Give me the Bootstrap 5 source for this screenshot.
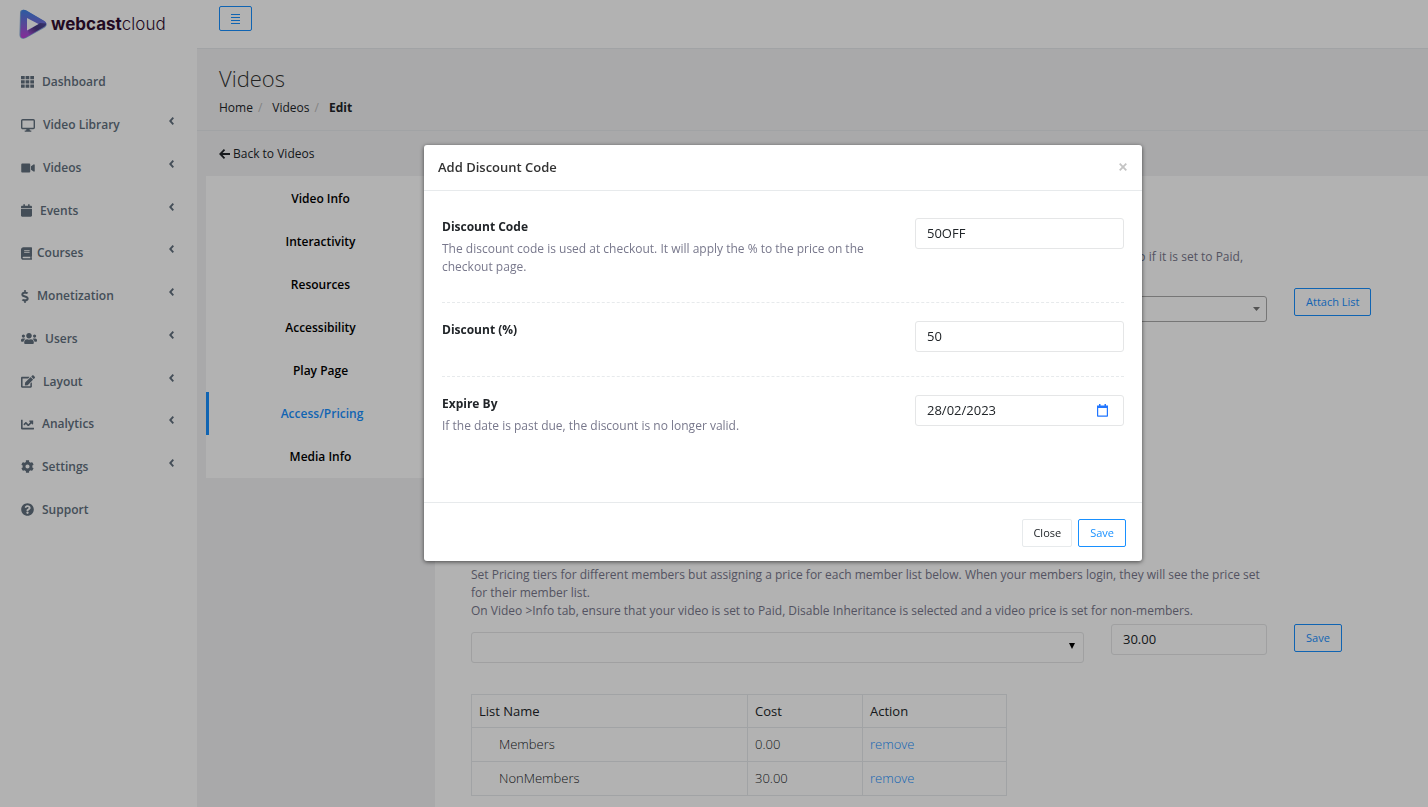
<!DOCTYPE html>
<html lang="en">
<head>
<meta charset="utf-8">
<meta name="viewport" content="width=device-width, initial-scale=1">
<title>Videos - webcastcloud</title>
<link href="https://cdn.jsdelivr.net/npm/bootstrap@5.3.0/dist/css/bootstrap.min.css" rel="stylesheet">
<style>
  :root { --brand: #1890ff; --line: #e7eaec; --edge: #e5e6e7; --muted: #78788c; --nav: #62707e; }
  body { font-family: "Open Sans", sans-serif; font-size: 13px; line-height: 18px; color: #212529; background: #f3f3f4; }
  a { text-decoration: none; color: var(--brand); }
  svg { fill: currentColor; flex: none; }

  .side { width: 197px; background: #fff; }
  .logo { height: 61px; padding: 9px 0 0 19px; }
  .logo a { color: #320f32; font-family: Inter, sans-serif; font-size: 17px; line-height: 29px; font-weight: 700; gap: 4px; }
  .logo span span { font-weight: 300; }
  .menu { height: 470px; }
  .menu a { color: var(--nav); font-weight: 600; font-size: 12px; padding: 0 23px 0 21px; gap: 8px; }
  .menu a.tight { gap: 5px; }
  .menu .caret { margin: 0 0 8px auto; }

  .topbar { height: 49px; background: #fff; border-bottom: 1px solid var(--line); padding: 6px 22px 0; }
  .btn-brand { --bs-btn-color: var(--brand); --bs-btn-border-color: var(--brand); --bs-btn-hover-bg: var(--brand); --bs-btn-hover-color: #fff;
    --bs-btn-font-size: 11px; --bs-btn-line-height: 18px; --bs-btn-padding-x: 11px; --bs-btn-padding-y: 4px; --bs-btn-border-radius: 2px; }
  .btn-plain { --bs-btn-color: #212529; --bs-btn-border-color: var(--line); --bs-btn-font-size: 11px; --bs-btn-line-height: 18px;
    --bs-btn-padding-x: 10px; --bs-btn-padding-y: 4px; --bs-btn-border-radius: 2px; }
  .toggle { height: 25px; --bs-btn-padding-x: 10px; --bs-btn-padding-y: 0px; }
  .heading { height: 82px; padding: 16px 22px 0; border-bottom: 1px solid var(--line); }
  .heading h1 { font-size: 22px; line-height: 26px; font-weight: 300; margin-bottom: 8px; color: #333; }
  .breadcrumb { --bs-breadcrumb-font-size: 12px; --bs-breadcrumb-item-padding-x: 5px; --bs-breadcrumb-divider-color: #bbb; }
  .breadcrumb a { color: #212529; }
  .breadcrumb-item + .breadcrumb-item::before { padding-right: 10px; font-weight: 400; }
  .back { height: 45px; padding: 0 22px; font-size: 12px; }
  .back a { color: #212529; gap: 3px; }

  .tabs { width: 229px; height: 302px; margin-left: 9px; background: #fff; }
  .tabs a { color: #000; font-size: 12px; font-weight: 600; padding-top: 2px; }
  .tabs a.active { color: var(--brand); border-left: 3px solid var(--brand); }
  .panel { background: #fff; padding: 72px 0 12px 36px; }
  .hint { color: var(--muted); font-size: 12px; line-height: 18px; }
  .grid3 { display: grid; grid-template-columns: 613fr 156fr 134fr; column-gap: 27px; align-items: start; }
  .wide { grid-column: span 2; }
  .attach { margin-top: 22px; }
  .form-control, .drop { font-size: 13px; line-height: 19px; padding: 5px 11px; border: 1px solid var(--edge); border-radius: 3px; color: #212529; background-color: #fff; }
  .drop { width: 100%; height: 31px; appearance: none; background-repeat: no-repeat; background-position: right 8px top 10px; background-size: 6px 6px;
    background-image: url("data:image/svg+xml,%3Csvg xmlns='http://www.w3.org/2000/svg' viewBox='0 0 6 6'%3E%3Cpath d='M0 0h6L3 6z' fill='black'/%3E%3C/svg%3E"); }
  .drop-list { height: 26px; border-color: #aaa; background-position: right 6px center; background-size: 7px 4px;
    background-image: url("data:image/svg+xml,%3Csvg xmlns='http://www.w3.org/2000/svg' viewBox='0 0 7 4'%3E%3Cpath d='M0 0h7L3.500 4z' fill='%23777'/%3E%3C/svg%3E"); }
  .pricing { margin-top: 244px; }
  .prices { width: 56%; margin-top: 31px; }
  .prices.table { --bs-table-color: #212529; border-color: var(--line); }
  .prices th, .prices td { padding: 7px; font-weight: 400; line-height: 19px; }
  .prices th { line-height: 18px; }
  .prices td { font-weight: 300; }
  .prices td:first-child { padding-left: 27px; }

  .modal-backdrop.show { --bs-backdrop-opacity: .3; }
  .modal { padding-left: 138px; }
  .modal-dialog { max-width: 718px; margin-top: 145px; }
  .modal-content { border: 0; border-radius: 3px; box-shadow: 0 1px 4px rgba(0,0,0,.6); }
  .modal-header { padding: 0 14px 2px; height: 46px; border-color: var(--line); }
  .modal-title { font-size: 13px; line-height: 18px; font-weight: 600; color: #333; }
  .btn-x { border: 0; padding: 0; background: none; color: #c4c4c4; line-height: 0; margin-right: 1px; }
  .modal-body { padding: 27px 18px 65px; }
  .field { display: grid; grid-template-columns: 473fr 209fr; align-items: start; }
  .field + .field { border-top: 1px dashed #e7eaec; padding-top: 18px; }
  .field label { font-size: 12px; font-weight: 700; display: block; margin-bottom: 4px; }
  .field .hint { padding: 0 34px 2px 0; margin: 0; }
  .date-icon { position: absolute; right: 16px; top: 9px; color: #2176ff; }
  .modal-footer { padding: 16px; gap: 6px; border-color: var(--line); height: 59px; align-items: flex-start; }
  .modal-footer > * { margin: 0; }
</style>
</head>
<body>
<svg class="d-none" aria-hidden="true">
  <symbol id="caret" viewBox="0 0 5 8"><path d="M4.300 .7 1.200 4l3.100 3.300" fill="none" stroke="currentColor" stroke-width="1.900"/></symbol>
</svg>

<div class="d-flex min-vh-100">
  <aside class="side flex-shrink-0">
    <div class="logo">
      <a href="#" class="d-flex align-items-center">
        <svg width="28" height="30" viewBox="0 0 28 30">
          <defs>
            <linearGradient id="g1" x1="0.300" y1="0" x2="0.200" y2="1"><stop offset="0" stop-color="#3d85e8"/><stop offset=".5" stop-color="#7a68d8"/><stop offset="1" stop-color="#c040d8"/></linearGradient>
            <linearGradient id="g2" x1="0" y1="1" x2="1" y2="0"><stop offset="0" stop-color="#b04fe0"/><stop offset=".5" stop-color="#4a3880"/><stop offset="1" stop-color="#4a4a9c"/></linearGradient>
          </defs>
          <path d="M1 4C1 1 4 0 7 1.500L25 12c3.500 2 3.500 5 0 7L7 29C3.500 31 .5 29 .5 26z" fill="#7fa6d8"/>
          <path d="M2 4c0-3 2.500-4 5-2.700L25 11.800c3 1.800 3 4.200 0 6L6.500 28.500C4 30 1.500 29 1.500 26z" fill="url(#g1)"/>
          <path d="M9 21.500 21 14l6 .5c.2 1.300-.5 2.300-2 3.300L10 26.500z" fill="url(#g2)"/>
          <path d="M8 9v12.500L19.500 15z" fill="#fff"/>
        </svg>
        <span>webcast<span>cloud</span></span>
      </a>
    </div>
    <ul class="menu list-unstyled d-flex flex-column m-0">
      <li class="d-flex flex-fill"><a href="#" class="d-flex align-items-center w-100"><svg width="13" height="12" viewBox="0 0 13 12"><path d="M0 0h3.700v3.300H0zM4.600 0h3.700v3.300H4.600zM9.300 0H13v3.300H9.300zM0 4.300h3.700v3.300H0zM4.600 4.300h3.700v3.300H4.600zM9.300 4.300H13v3.300H9.300zM0 8.500h3.700v3.300H0zM4.600 8.500h3.700v3.300H4.600zM9.300 8.500H13v3.300H9.300z"/></svg>Dashboard</a></li>
      <li class="d-flex flex-fill"><a href="#" class="d-flex align-items-center w-100"><svg width="14" height="13" viewBox="0 0 14 13"><rect x=".7" y=".7" width="12.600" height="8.800" rx="1" fill="none" stroke="currentColor" stroke-width="1.400"/><path d="M5.600 9.500h2.800l.5 2h1.400V12.700H3.700V11.500h1.400z"/></svg>Video Library<svg class="caret" width="5" height="8"><use href="#caret"/></svg></a></li>
      <li class="d-flex flex-fill"><a href="#" class="d-flex align-items-center w-100"><svg width="14" height="12" viewBox="0 0 576 512"><path d="M336.200 64H47.800C21.400 64 0 85.400 0 111.800v288.400C0 426.600 21.400 448 47.800 448h288.400c26.400 0 47.800-21.400 47.800-47.800V111.800c0-26.400-21.400-47.800-47.800-47.800zm189.400 37.700L416 177.300v157.400l109.600 75.500c21.200 14.600 50.400-.3 50.400-25.800V127.500c0-25.400-29.100-40.400-50.400-25.800z"/></svg>Videos<svg class="caret" width="5" height="8"><use href="#caret"/></svg></a></li>
      <li class="d-flex flex-fill"><a href="#" class="d-flex align-items-center w-100"><svg width="11" height="13" viewBox="0 0 448 512"><path d="M12 192h424c6.600 0 12 5.400 12 12v260c0 26.500-21.500 48-48 48H48c-26.500 0-48-21.500-48-48V204c0-6.600 5.400-12 12-12zm436-44v-36c0-26.500-21.500-48-48-48h-48V12c0-6.600-5.400-12-12-12h-40c-6.600 0-12 5.400-12 12v52H160V12c0-6.600-5.400-12-12-12h-40c-6.600 0-12 5.400-12 12v52H48C21.500 64 0 85.500 0 112v36c0 6.600 5.400 12 12 12h424c6.600 0 12-5.400 12-12z"/></svg>Events<svg class="caret" width="5" height="8"><use href="#caret"/></svg></a></li>
      <li class="d-flex flex-fill"><a href="#" class="tight d-flex align-items-center w-100"><svg width="11" height="13" viewBox="0 0 448 512"><path d="M448 360V24c0-13.300-10.700-24-24-24H96C43 0 0 43 0 96v320c0 53 43 96 96 96h328c13.300 0 24-10.700 24-24v-16c0-7.500-3.500-14.300-8.900-18.700-4.200-15.400-4.200-59.300 0-74.700 5.400-4.300 8.900-11.100 8.900-18.600zM128 134c0-3.300 2.700-6 6-6h212c3.300 0 6 2.700 6 6v20c0 3.300-2.700 6-6 6H134c-3.300 0-6-2.700-6-6v-20zm0 64c0-3.300 2.700-6 6-6h212c3.300 0 6 2.700 6 6v20c0 3.300-2.700 6-6 6H134c-3.300 0-6-2.700-6-6v-20zm253.400 250H96c-17.700 0-32-14.300-32-32 0-17.600 14.400-32 32-32h285.400c-1.900 17.100-1.900 46.900 0 64z"/></svg>Courses<svg class="caret" width="5" height="8"><use href="#caret"/></svg></a></li>
      <li class="d-flex flex-fill"><a href="#" class="d-flex align-items-center w-100"><svg width="8" height="13" viewBox="0 0 288 512"><path d="M209.200 233.400l-108-31.600C88.700 198.200 80 186.500 80 173.500c0-16.300 13.200-29.500 29.500-29.500h66.300c12.200 0 24.200 3.700 34.200 10.500 6.100 4.100 14.300 3.100 19.500-2l34.800-34c7.100-6.900 6.100-18.400-1.800-24.500C238 74.800 207.400 64.100 176 64V16c0-8.800-7.200-16-16-16h-32c-8.800 0-16 7.200-16 16v48h-2.500C45.800 64-5.400 118.700.5 183.600c4.200 46.100 39.400 83.600 83.800 96.600l102.500 30c12.500 3.700 21.200 15.300 21.200 28.300 0 16.300-13.200 29.500-29.500 29.500h-66.300C100 368 88 364.300 78 357.500c-6.100-4.100-14.300-3.100-19.500 2l-34.800 34c-7.100 6.900-6.100 18.400 1.800 24.500 24.500 19.200 55.100 29.900 86.500 30v48c0 8.800 7.200 16 16 16h32c8.800 0 16-7.200 16-16v-48.200c46.600-.9 90.300-28.600 105.700-72.700 21.500-61.600-14.600-124.800-72.500-141.700z"/></svg>Monetization<svg class="caret" width="5" height="8"><use href="#caret"/></svg></a></li>
      <li class="d-flex flex-fill"><a href="#" class="d-flex align-items-center w-100"><svg width="16" height="13" viewBox="0 0 640 512"><path d="M96 224c35.300 0 64-28.700 64-64s-28.700-64-64-64-64 28.700-64 64 28.700 64 64 64zm448 0c35.300 0 64-28.700 64-64s-28.700-64-64-64-64 28.700-64 64 28.700 64 64 64zm32 32h-64c-17.600 0-33.500 7.100-45.100 18.600 40.300 22.100 68.900 62 75.100 109.400h66c17.700 0 32-14.300 32-32v-32c0-35.300-28.700-64-64-64zm-256 0c61.900 0 112-50.100 112-112S381.900 32 320 32 208 82.100 208 144s50.100 112 112 112zm76.800 32h-8.300c-20.800 10-43.900 16-68.500 16s-47.600-6-68.500-16h-8.300C179.600 288 128 339.600 128 403.200V432c0 26.500 21.500 48 48 48h288c26.500 0 48-21.500 48-48v-28.800c0-63.600-51.600-115.200-115.200-115.200zm-223.700-13.400C161.500 263.100 145.600 256 128 256H64c-35.300 0-64 28.700-64 64v32c0 17.700 14.300 32 32 32h65.900c6.300-47.400 34.900-87.300 75.200-109.400z"/></svg>Users<svg class="caret" width="5" height="8"><use href="#caret"/></svg></a></li>
      <li class="d-flex flex-fill"><a href="#" class="d-flex align-items-center w-100"><svg width="14" height="13" viewBox="0 0 576 512"><path d="M402.600 83.200l90.200 90.200c3.800 3.800 3.800 10 0 13.800L274.400 405.600l-92.800 10.300c-12.400 1.400-22.900-9.100-21.500-21.500l10.300-92.800L388.800 83.200c3.800-3.800 10-3.800 13.800 0zm162-22.900l-48.800-48.800c-15.200-15.200-39.900-15.200-55.200 0l-35.400 35.400c-3.800 3.800-3.800 10 0 13.800l90.200 90.200c3.800 3.800 10 3.800 13.800 0l35.400-35.400c15.200-15.300 15.200-40 0-55.200zM384 346.200V448H64V128h229.800c3.200 0 6.200-1.300 8.500-3.500l40-40c7.600-7.600 2.200-20.500-8.500-20.500H48C21.500 64 0 85.500 0 112v352c0 26.500 21.500 48 48 48h352c26.500 0 48-21.500 48-48V306.200c0-10.700-12.900-16-20.500-8.500l-40 40c-2.200 2.300-3.500 5.300-3.500 8.500z"/></svg>Layout<svg class="caret" width="5" height="8"><use href="#caret"/></svg></a></li>
      <li class="d-flex flex-fill"><a href="#" class="d-flex align-items-center w-100"><svg width="13" height="13" viewBox="0 0 512 512"><path d="M496 384H64V80c0-8.840-7.160-16-16-16H16C7.160 64 0 71.160 0 80v336c0 17.670 14.330 32 32 32h464c8.840 0 16-7.160 16-16v-32c0-8.840-7.160-16-16-16zM464 96H345.940c-21.380 0-32.090 25.850-16.970 40.970l32.400 32.400L288 242.750l-73.370-73.370c-12.500-12.500-32.760-12.500-45.250 0l-68.690 68.690c-6.250 6.250-6.250 16.380 0 22.630l22.620 22.620c6.250 6.250 16.380 6.250 22.630 0L192 237.250l73.370 73.370c12.500 12.500 32.760 12.500 45.250 0l96-96 32.400 32.400c15.120 15.120 40.970 4.410 40.970-16.970V112c.01-8.840-7.150-16-15.990-16z"/></svg>Analytics<svg class="caret" width="5" height="8"><use href="#caret"/></svg></a></li>
      <li class="d-flex flex-fill"><a href="#" class="d-flex align-items-center w-100"><svg width="13" height="13" viewBox="0 0 512 512"><path d="M487.400 315.700l-42.600-24.600c4.300-23.200 4.300-47 0-70.200l42.600-24.600c4.900-2.800 7.100-8.600 5.500-14-11.100-35.600-30-67.800-54.700-94.600-3.800-4.100-10-5.100-14.800-2.300L380.800 110c-17.900-15.400-38.500-27.300-60.800-35.100V25.800c0-5.600-3.900-10.500-9.400-11.700-36.700-8.200-74.300-7.800-109.200 0-5.500 1.200-9.400 6.100-9.400 11.700V75c-22.200 7.900-42.800 19.800-60.800 35.100L88.700 85.500c-4.900-2.800-11-1.900-14.800 2.300-24.700 26.700-43.600 58.900-54.700 94.600-1.700 5.400.6 11.200 5.500 14L67.300 221c-4.300 23.200-4.300 47 0 70.200l-42.600 24.600c-4.900 2.800-7.100 8.600-5.500 14 11.100 35.600 30 67.800 54.700 94.600 3.800 4.100 10 5.100 14.800 2.300l42.600-24.600c17.900 15.400 38.500 27.300 60.800 35.100v49.200c0 5.600 3.900 10.500 9.400 11.700 36.700 8.200 74.300 7.800 109.200 0 5.500-1.200 9.400-6.100 9.400-11.700v-49.200c22.200-7.900 42.800-19.800 60.800-35.100l42.600 24.600c4.900 2.800 11 1.900 14.800-2.300 24.700-26.700 43.600-58.900 54.700-94.600 1.500-5.500-.7-11.300-5.600-14.100zM256 336c-44.100 0-80-35.900-80-80s35.900-80 80-80 80 35.900 80 80-35.900 80-80 80z"/></svg>Settings<svg class="caret" width="5" height="8"><use href="#caret"/></svg></a></li>
      <li class="d-flex flex-fill"><a href="#" class="d-flex align-items-center w-100"><svg width="13" height="13" viewBox="0 0 512 512"><path d="M504 256c0 136.997-111.043 248-248 248S8 392.997 8 256C8 119.083 119.043 8 256 8s248 111.083 248 248zM262.655 90c-54.497 0-89.255 22.957-116.549 63.758-3.536 5.286-2.353 12.415 2.715 16.258l34.699 26.310c5.205 3.947 12.621 3.008 16.665-2.122 17.864-22.658 30.113-35.797 57.303-35.797 20.429 0 45.698 13.148 45.698 32.958 0 14.976-12.363 22.667-32.534 33.976C247.128 238.528 216 254.941 216 296v4c0 6.627 5.373 12 12 12h56c6.627 0 12-5.373 12-12v-1.333c0-28.462 83.186-29.647 83.186-106.667 0-58.002-60.165-102-116.531-102zM256 338c-25.365 0-46 20.635-46 46 0 25.364 20.635 46 46 46s46-20.636 46-46c0-25.364-20.635-46-46-46z"/></svg>Support</a></li>
    </ul>
  </aside>

  <div class="flex-grow-1 d-flex flex-column">
    <nav class="topbar">
      <button type="button" class="btn btn-brand toggle d-inline-flex align-items-center" aria-label="Toggle menu"><svg width="11" height="10" viewBox="0 0 11 10"><path d="M1 0h9v1H1zM1 3h9v1H1zM1 6h9v1H1zM1 9h9v1H1z"/></svg></button>
    </nav>
    <header class="heading">
      <h1>Videos</h1>
      <ol class="breadcrumb m-0">
        <li class="breadcrumb-item"><a href="#">Home</a></li>
        <li class="breadcrumb-item"><a href="#">Videos</a></li>
        <li class="breadcrumb-item active fw-bold text-dark">Edit</li>
      </ol>
    </header>
    <div class="back d-flex align-items-center">
      <a href="#" class="d-flex align-items-center"><svg width="11" height="10" viewBox="0 0 11 10"><path d="M5.500.7 1.300 5l4.200 4.300M1.500 5H11" fill="none" stroke="currentColor" stroke-width="1.800"/></svg>Back to Videos</a>
    </div>
    <main class="d-flex flex-grow-1">
      <nav class="tabs d-flex flex-column flex-shrink-0">
        <a href="#" class="d-flex flex-fill align-items-center justify-content-center">Video Info</a>
        <a href="#" class="d-flex flex-fill align-items-center justify-content-center">Interactivity</a>
        <a href="#" class="d-flex flex-fill align-items-center justify-content-center">Resources</a>
        <a href="#" class="d-flex flex-fill align-items-center justify-content-center">Accessibility</a>
        <a href="#" class="d-flex flex-fill align-items-center justify-content-center">Play Page</a>
        <a href="#" class="active d-flex flex-fill align-items-center justify-content-center">Access/Pricing</a>
        <a href="#" class="d-flex flex-fill align-items-center justify-content-center">Media Info</a>
      </nav>
      <section class="panel flex-grow-1">
        <div class="grid3">
          <p class="hint wide text-end pe-4 mb-0">so if it is set to Paid,</p>
        </div>
        <div class="grid3 attach">
          <div class="wide pt-2"><select class="drop drop-list" aria-label="Member list"><option></option></select></div>
          <div><button type="button" class="btn btn-brand">Attach List</button></div>
        </div>
        <div class="pricing">
          <div class="grid3">
            <p class="hint wide mb-1">Set Pricing tiers for different members but assigning a price for each member list below. When your members login, they will see the price set for their member list.<br>On Video &gt;Info tab, ensure that your video is set to Paid, Disable Inheritance is selected and a video price is set for non-members.</p>
          </div>
          <div class="grid3">
            <div class="pt-2"><select class="drop" aria-label="Pricing list"><option></option></select></div>
            <input class="form-control" type="text" value="30.00" aria-label="Price">
            <div><button type="button" class="btn btn-brand">Save</button></div>
          </div>
          <table class="table table-bordered prices mb-0">
            <colgroup><col style="width:51.600%"><col style="width:21.500%"><col></colgroup>
            <thead><tr><th scope="col">List Name</th><th scope="col">Cost</th><th scope="col">Action</th></tr></thead>
            <tbody>
              <tr><td>Members</td><td>0.00</td><td><a href="#">remove</a></td></tr>
              <tr><td>NonMembers</td><td>30.00</td><td><a href="#">remove</a></td></tr>
            </tbody>
          </table>
        </div>
      </section>
    </main>
  </div>
</div>

<div class="modal-backdrop show"></div>
<div class="modal d-block" role="dialog" aria-modal="true" aria-labelledby="dlgTitle">
  <div class="modal-dialog">
    <form class="modal-content">
      <div class="modal-header">
        <h2 class="modal-title" id="dlgTitle">Add Discount Code</h2>
        <button type="button" class="btn-x" aria-label="Close dialog"><svg width="8" height="8" viewBox="0 0 8 8"><path d="M.7.7l6.600 6.600M7.300.7.7 7.300" stroke="currentColor" stroke-width="1.800"/></svg></button>
      </div>
      <div class="modal-body">
        <div class="field pb-4">
          <div><label for="code">Discount Code</label><p class="hint">The discount code is used at checkout. It will apply the % to the price on the checkout page.</p></div>
          <input class="form-control" id="code" type="text" value="50OFF">
        </div>
        <div class="field pb-4">
          <label for="pct">Discount (%)</label>
          <input class="form-control" id="pct" type="text" value="50">
        </div>
        <div class="field">
          <div><label for="exp">Expire By</label><p class="hint">If the date is past due, the discount is no longer valid.</p></div>
          <div class="position-relative">
            <input class="form-control" id="exp" type="text" value="28/02/2023">
            <svg class="date-icon" width="11" height="13" viewBox="0 0 11 13"><path d="M0 1.500h11V12q0 .8-.8.800H.8Q0 12.800 0 12zM1.200 4v7.600h8.600V4z" fill-rule="evenodd"/><path d="M2 0h1.500v2H2zM7.500 0H9v2H7.500z"/></svg>
          </div>
        </div>
      </div>
      <div class="modal-footer">
        <button type="button" class="btn btn-plain">Close</button>
        <button type="submit" class="btn btn-brand">Save</button>
      </div>
    </form>
  </div>
</div>
<script src="https://cdn.jsdelivr.net/npm/bootstrap@5.3.0/dist/js/bootstrap.bundle.min.js"></script>
</body>
</html>
